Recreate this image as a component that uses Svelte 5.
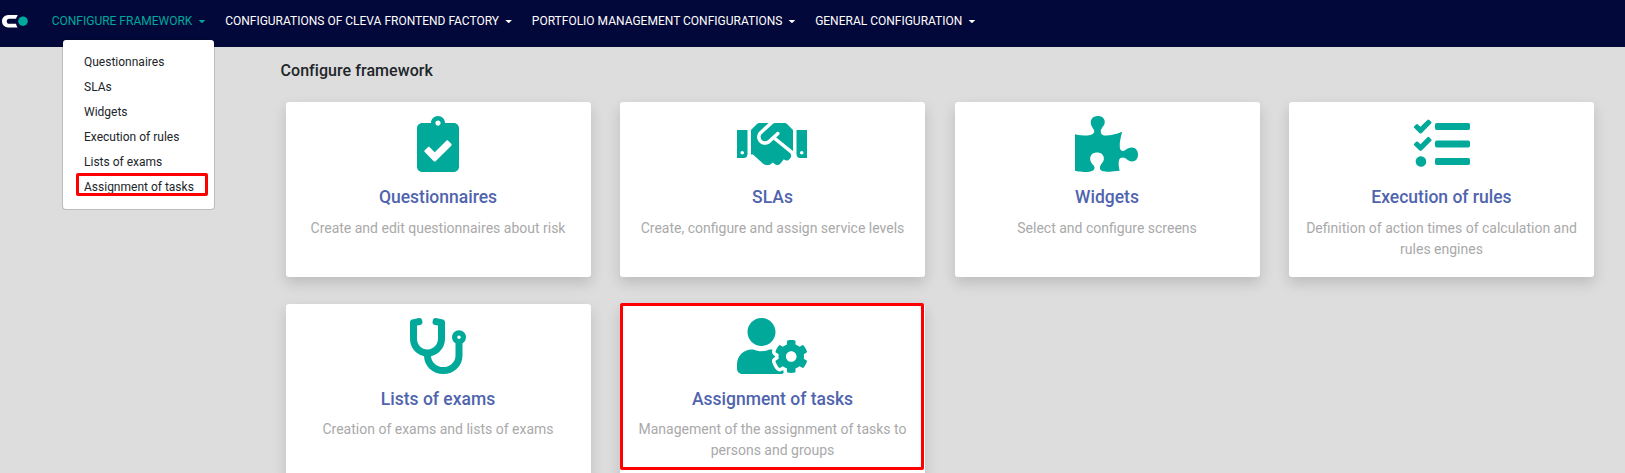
<script>
  const nav = [
    { label: 'CONFIGURE FRAMEWORK', active: true },
    { label: 'CONFIGURATIONS OF CLEVA FRONTEND FACTORY' },
    { label: 'PORTFOLIO MANAGEMENT CONFIGURATIONS' },
    { label: 'GENERAL CONFIGURATION' }
  ];
  const menu = ['Questionnaires', 'SLAs', 'Widgets', 'Execution of rules', 'Lists of exams', 'Assignment of tasks'];
  const cards = [
    { title: 'Questionnaires', text: 'Create and edit questionnaires about risk', w: 384, d: 'M336 64h-80c0-35.3-28.7-64-64-64s-64 28.7-64 64H48C21.5 64 0 85.5 0 112v352c0 26.5 21.5 48 48 48h288c26.5 0 48-21.5 48-48V112c0-26.5-21.5-48-48-48zM192 40c13.3 0 24 10.7 24 24s-10.7 24-24 24-24-10.7-24-24 10.7-24 24-24zm121.2 231.8l-143 141.8c-4.7 4.7-12.3 4.6-17-.1l-82.6-83.3c-4.7-4.7-4.6-12.3.1-17L99.1 285c4.7-4.7 12.3-4.6 17 .1l46 46.4 106-105.2c4.7-4.7 12.3-4.6 17 .1l28.2 28.4c4.7 4.8 4.6 12.3-.1 17z' },
    { title: 'SLAs', text: 'Create, configure and assign service levels', w: 640, d: 'M434.7 64h-85.9c-8 0-15.7 3-21.6 8.4l-98.3 90c-.1.1-.2.3-.3.4-16.6 15.6-16.3 40.5-2.1 56 12.7 13.9 39.4 17.6 56.1 2.7.1-.1.3-.1.4-.2l79.9-73.2c6.5-5.9 16.7-5.5 22.6 1 6 6.5 5.5 16.6-1 22.6l-26.1 23.9L504 313.8c2.9 2.4 5.5 5 7.9 7.7V128l-54.6-54.6c-5.9-6-14.1-9.4-22.6-9.4zM544 128.2v223.9c0 17.7 14.3 32 32 32h64V128.2h-96zm48 223.9c-8.8 0-16-7.2-16-16s7.2-16 16-16 16 7.2 16 16-7.2 16-16 16zM0 384h64c17.7 0 32-14.3 32-32V128.2H0V384zm48-63.9c8.8 0 16 7.2 16 16s-7.2 16-16 16-16-7.2-16-16c0-8.9 7.2-16 16-16zm435.9 18.6L334.6 217.5l-30 27.5c-29.7 27.1-75.2 24.5-101.7-4.4-26.9-29.4-24.8-74.9 4.4-101.7L289.1 64h-83.8c-8.5 0-16.6 3.4-22.6 9.4L128 128v223.9h18.3l90.5 81.9c27.4 22.3 67.7 18.1 90-9.3l.2-.2 17.9 15.5c15.9 13 39.4 10.5 52.3-5.4l31.4-38.6 5.4 4.4c13.7 11.1 33.9 9.1 45-4.7l9.5-11.7c11.2-13.8 9.1-33.9-4.6-45.1z' },
    { title: 'Widgets', text: 'Select and configure screens', w: 576, d: 'M519.442 288.651c-41.519 0-59.5 31.593-82.058 31.593C377.409 320.244 432 144 432 144s-196.288 80-196.288-3.297c0-35.827 36.288-46.25 36.288-85.985C272 19.216 243.885 0 210.539 0c-34.654 0-66.366 18.891-66.366 56.346 0 41.364 31.711 59.277 31.711 81.75C175.885 207.719 0 166.758 0 166.758v333.237s178.635 41.047 178.635-28.662c0-22.473-40-40.107-40-81.471 0-37.456 29.25-56.346 63.577-56.346 33.673 0 61.788 19.216 61.788 54.717 0 39.735-36.288 50.158-36.288 85.985 0 60.803 129.675 25.73 181.23 25.73 0 0-34.725-120.101 25.827-120.101 35.962 0 46.423 36.152 86.308 36.152C556.712 416 576 387.99 576 354.443c0-34.199-18.962-65.792-56.558-65.792z' },
    { title: 'Execution of rules', text: 'Definition of action times of calculation and rules engines', w: 512, d: 'M139.61 35.5a12 12 0 0 0-17 0L58.93 98.81l-22.7-22.12a12 12 0 0 0-17 0L3.53 92.41a12 12 0 0 0 0 17l47.59 47.4a12.78 12.78 0 0 0 17.61 0l15.59-15.62L156.52 69a12.09 12.09 0 0 0 .09-17zm0 159.19a12 12 0 0 0-17 0l-63.68 63.72-22.7-22.1a12 12 0 0 0-17 0L3.53 252a12 12 0 0 0 0 17L51 316.5a12.77 12.77 0 0 0 17.6 0l15.7-15.69 72.2-72.22a12 12 0 0 0 .09-16.9zM64 368c-26.49 0-48.59 21.5-48.59 48S37.53 464 64 464a48 48 0 0 0 0-96zm432 16H208a16 16 0 0 0-16 16v32a16 16 0 0 0 16 16h288a16 16 0 0 0 16-16v-32a16 16 0 0 0-16-16zm0-320H208a16 16 0 0 0-16 16v32a16 16 0 0 0 16 16h288a16 16 0 0 0 16-16V80a16 16 0 0 0-16-16zm0 160H208a16 16 0 0 0-16 16v32a16 16 0 0 0 16 16h288a16 16 0 0 0 16-16v-32a16 16 0 0 0-16-16z' },
    { title: 'Lists of exams', text: 'Creation of exams and lists of exams', w: 512, d: 'M447.1 112c-34.2.5-62.3 28.4-63 62.6-.5 24.3 12.5 45.6 32 56.8V344c0 57.3-50.2 104-112 104-60 0-109.2-44.1-111.9-99.2C265 333.8 320 269.2 320 192V36.6c0-11.4-8.1-21.3-19.3-23.5L237.8.5c-13-2.6-25.6 5.8-28.2 18.8L206.4 35c-2.6 13 5.8 25.6 18.8 28.2l30.7 6.1v121.4c0 52.9-42.2 96.7-95.1 97.2-53.4.5-96.9-42.7-96.9-96V69.4l30.7-6.1c13-2.6 21.4-15.2 18.8-28.2l-3.1-15.7C107.7 6.4 95.1-2 82.1.6L19.3 13C8.1 15.3 0 25.1 0 36.6V192c0 77.3 55.1 142 128.1 156.8C130.7 439.2 208.6 512 304 512c97 0 176-75.4 176-168V231.4c19.1-11.1 32-31.7 32-55.4 0-35.7-29.2-64.5-64.9-64zm.9 80c-8.8 0-16-7.2-16-16s7.2-16 16-16 16 7.2 16 16-7.2 16-16 16z' },
    { title: 'Assignment of tasks', text: 'Management of the assignment of tasks to persons and groups', w: 640, marked: true, d: 'M610.5 373.3c2.6-14.1 2.6-28.5 0-42.6l25.8-14.9c3-1.7 4.3-5.2 3.3-8.5-6.7-21.6-18.2-41.2-33.2-57.4-2.3-2.5-6-3.1-9-1.4l-25.8 14.9c-10.9-9.3-23.4-16.5-36.9-21.3v-29.8c0-3.4-2.4-6.4-5.7-7.1-22.3-5-45-4.8-66.2 0-3.3.7-5.7 3.7-5.7 7.1v29.8c-13.5 4.8-26 12-36.9 21.3l-25.8-14.9c-2.9-1.7-6.7-1.1-9 1.4-15 16.2-26.5 35.8-33.2 57.4-1 3.3.4 6.8 3.3 8.5l25.8 14.9c-2.6 14.1-2.6 28.5 0 42.6l-25.8 14.9c-3 1.7-4.3 5.2-3.3 8.5 6.7 21.6 18.2 41.1 33.2 57.4 2.3 2.5 6 3.1 9 1.4l25.8-14.9c10.9 9.3 23.4 16.5 36.9 21.3v29.8c0 3.4 2.4 6.4 5.7 7.1 22.3 5 45 4.8 66.2 0 3.3-.7 5.7-3.7 5.7-7.1v-29.8c13.5-4.8 26-12 36.9-21.3l25.8 14.9c2.9 1.7 6.7 1.1 9-1.4 15-16.2 26.5-35.8 33.2-57.4 1-3.3-.4-6.8-3.3-8.5l-25.8-14.9zM496 400.5c-26.8 0-48.5-21.8-48.5-48.5s21.8-48.5 48.5-48.5 48.5 21.8 48.5 48.5-21.7 48.5-48.5 48.5zM224 256c70.7 0 128-57.3 128-128S294.7 0 224 0 96 57.3 96 128s57.3 128 128 128zm201.2 226.5c-2.3-1.2-4.6-2.6-6.8-3.9l-7.9 4.6c-6 3.4-12.8 5.3-19.6 5.3-10.9 0-21.4-4.6-28.9-12.6-18.3-19.8-32.3-43.9-40.2-69.6-5.5-17.7 1.9-36.4 17.9-45.7l7.9-4.6c-.1-2.6-.1-5.2 0-7.8l-7.9-4.6c-16-9.2-23.4-28-17.9-45.7.9-2.9 2.2-5.8 3.2-8.7-3.8-.3-7.5-1.2-11.4-1.2h-16.7c-22.2 10.2-46.9 16-72.9 16s-50.6-5.8-72.9-16h-16.7C60.2 288 0 348.2 0 422.4V464c0 26.5 21.5 48 48 48h352c10.1 0 19.5-3.2 27.2-8.5-1.2-3.8-2-7.7-2-11.8v-9.2z' }
  ];
</script>

<div class="page">
  <header>
    <svg class="logo" viewBox="0 0 28 14" width="28" height="14">
      <path d="M16.6 1H8.2a6.2 6.2 0 0 0 0 12.5h9.4c-.8-1.1-1.4-2.2-1.6-3.7H9.3a2.5 2.5 0 0 1 0-5.1h6.8c.2-1.3.9-2.3 1.8-3.2z" fill="#fff" />
      <circle cx="23" cy="7.2" r="4.8" fill="#00a99d" />
    </svg>
    <nav>
      {#each nav as item}
        <a class:active={item.active}>{item.label}<i class="caret"></i></a>
      {/each}
    </nav>
  </header>

  <div class="dropdown">
    {#each menu as item, i}
      <a class:marked={i === 5}>{item}</a>
    {/each}
  </div>

  <main>
    <h1>Configure framework</h1>
    <div class="grid">
      {#each cards as card}
        <section class:marked={card.marked}>
          <svg class:wide={card.w > 512} viewBox="0 0 {card.w} 512" width={card.w * 56 / 512} height="56"><path d={card.d} fill="#00a99a" /></svg>
          <h2>{card.title}</h2>
          <p>{card.text}</p>
        </section>
      {/each}
    </div>
  </main>
</div>

<style>
  .page {
    position: relative;
    height: 473px;
    overflow: hidden;
    background: #ddd;
    font-family: Roboto, sans-serif;
    color: #212529;
  }
  header {
    display: flex;
    height: 47px;
    background: #03083a;
  }
  .logo { margin-top: 14px; flex: none; }
  nav {
    display: flex;
    gap: 19.6px;
    padding-left: 23.7px;
  }
  nav a {
    display: flex;
    align-items: center;
    height: 41px;
    font-size: 12px;
    color: #fff;
    white-space: nowrap;
  }
  nav a.active { color: #00a99a; }
  .caret {
    margin: 2px 0 0 6px;
    width: 7.2px;
    height: 3.6px;
    background: currentColor;
    clip-path: polygon(0 0, 100% 0, 50% 100%);
  }
  .dropdown {
    position: absolute;
    left: 62px;
    top: 39px;
    width: 153px;
    height: 171px;
    box-sizing: border-box;
    padding: 10px 0 0 21px;
    border: 1px solid rgba(0, 0, 0, 0.15);
    border-radius: 4px;
    background: #fff;
    background-clip: padding-box;
  }
  .dropdown a {
    display: block;
    position: relative;
    font-size: 12px;
    line-height: 25px;
  }
  .dropdown .marked::after {
    content: '';
    position: absolute;
    left: -8px;
    top: -2px;
    width: 126px;
    height: 17px;
    border: 3px solid #f00;
    border-radius: 2px;
  }
  main { padding: 14px 31px 0 280.5px; }
  h1 {
    margin: 0;
    font-size: 16px;
    line-height: 19px;
    font-weight: 500;
    letter-spacing: 0.06px;
  }
  .grid {
    display: grid;
    grid-template-columns: repeat(4, 1fr);
    gap: 26.8px 29.5px;
    padding: 22px 0 0 5px;
  }
  section {
    position: relative;
    display: flex;
    flex-direction: column;
    align-items: center;
    height: 174.8px;
    box-sizing: border-box;
    padding: 14px 15px 0;
    border-radius: 3px;
    background: #fff;
    box-shadow: 0 6px 14px rgba(0, 0, 0, 0.15);
  }
  section svg { flex: none; }
  section svg.wide { margin-right: 0.6px; }
  section.marked::after {
    content: '';
    position: absolute;
    left: 0;
    top: -1px;
    width: 298px;
    height: 161px;
    border: 3px solid #f00;
    border-radius: 2px;
  }
  h2 {
    margin: 14.4px 0 0;
    font-size: 17.5px;
    line-height: 22px;
    font-weight: 500;
    color: #4f64ad;
  }
  p {
    margin: 9.2px 0 0;
    font-size: 14px;
    line-height: 21px;
    text-align: center;
    color: #a9a9a9;
  }
</style>
